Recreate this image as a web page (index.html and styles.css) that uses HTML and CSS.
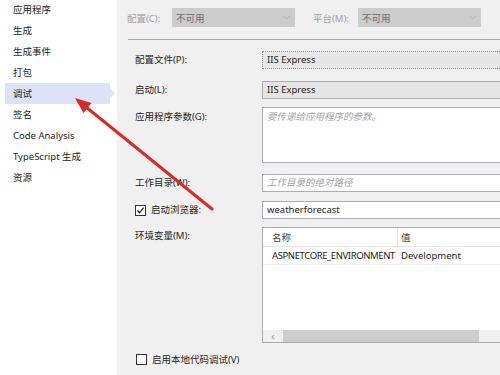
FILE: index.html
```html
<!DOCTYPE html>
<html lang="zh-CN">
<head>
    <meta charset="UTF-8">
    <title>调试</title>
    <link rel="stylesheet" href="styles.css">
</head>
<body>
    <div class="window">
        <aside class="sidebar">
            <ul class="nav">
                <li class="nav-item">应用程序</li>
                <li class="nav-item">生成</li>
                <li class="nav-item">生成事件</li>
                <li class="nav-item">打包</li>
                <li class="nav-item active">调试</li>
                <li class="nav-item">签名</li>
                <li class="nav-item">Code Analysis</li>
                <li class="nav-item">TypeScript 生成</li>
                <li class="nav-item">资源</li>
            </ul>
        </aside>

        <main class="panel">
            <div class="toolbar">
                <span class="toolbar-label">配置(C):</span>
                <div class="select disabled">
                    <span>不可用</span>
                    <svg class="chevron" width="7" height="5" viewBox="0 0 7 5"><path d="M0.5 1 L3.5 4 L6.5 1" fill="none" stroke="#b4b4b4" stroke-width="1"/></svg>
                </div>
                <span class="toolbar-label second">平台(M):</span>
                <div class="select disabled">
                    <span>不可用</span>
                    <svg class="chevron" width="7" height="5" viewBox="0 0 7 5"><path d="M0.5 1 L3.5 4 L6.5 1" fill="none" stroke="#b4b4b4" stroke-width="1"/></svg>
                </div>
            </div>
            <div class="divider"></div>

            <div class="form">
                <div class="field">
                    <span class="field-label">配置文件(P):</span>
                    <div class="control combo focused">IIS Express</div>
                </div>
                <div class="field gap-8">
                    <span class="field-label">启动(L):</span>
                    <div class="control combo">IIS Express</div>
                </div>
                <div class="field gap-8 tight">
                    <span class="field-label">应用程序参数(G):</span>
                    <div class="control textarea placeholder">要传递给应用程序的参数。</div>
                </div>
                <div class="field gap-11">
                    <span class="field-label">工作目录(W):</span>
                    <div class="control input placeholder">工作目录的绝对路径</div>
                </div>
                <div class="field gap-9">
                    <label class="field-label check-label">
                        <span class="checkbox checked">
                            <svg width="9" height="9" viewBox="0 0 9 9"><path d="M1.5 4.5 L3.6 6.8 L7.6 1.6" fill="none" stroke="#222" stroke-width="1.3"/></svg>
                        </span>
                        启动浏览器:
                    </label>
                    <div class="control input">weatherforecast</div>
                </div>
                <div class="field gap-8">
                    <span class="field-label">环境变量(M):</span>
                    <div class="env-table">
                        <div class="env-row env-head">
                            <span class="cell name">名称</span>
                            <span class="cell value">值</span>
                        </div>
                        <div class="env-row">
                            <span class="cell name caps">ASPNETCORE_ENVIRONMENT</span>
                            <span class="cell value">Development</span>
                        </div>
                        <div class="env-fill"></div>
                        <div class="hscroll">
                            <span class="hscroll-btn">&lsaquo;</span>
                            <span class="hscroll-thumb"></span>
                        </div>
                    </div>
                </div>
            </div>

            <label class="native-debug">
                <span class="checkbox"></span>
                启用本地代码调试(V)
            </label>
        </main>

        <svg class="annotation" width="500" height="375" viewBox="0 0 500 375">
            <line x1="212" y1="209" x2="86" y2="107" stroke="#d92a2a" stroke-width="3" stroke-linecap="round"/>
            <polygon points="75,98 91.5,103 83.5,113" fill="#d92a2a"/>
        </svg>
    </div>
</body>
</html>
```

FILE: styles.css
```css
* {
    margin: 0;
    padding: 0;
    box-sizing: border-box;
}

body {
    width: 500px;
    height: 375px;
    overflow: hidden;
    background-color: #f0f0f0;
    font-family: "Noto Sans", "Noto Sans CJK SC", sans-serif;
    font-size: 9.5px;
    color: #1e1e1e;
}

.window {
    position: relative;
    display: flex;
    width: 500px;
    height: 375px;
}

/* left page list */
.sidebar {
    width: 117px;
    flex: none;
    background-color: #fff;
}

.nav {
    list-style: none;
    margin-top: -1px;
}

.nav-item {
    position: relative;
    height: 21px;
    line-height: 21px;
    margin-left: 5px;
    width: 105px;
    padding-left: 8px;
    color: #1e1e1e;
}

.nav-item.active {
    background-color: #dce2f7;
}

.nav-item.active::after {
    content: "";
    position: absolute;
    right: -5px;
    top: 5px;
    border-top: 5px solid transparent;
    border-bottom: 5px solid transparent;
    border-left: 5px solid #dce2f7;
}

/* right settings panel */
.panel {
    flex: 1;
    min-width: 0;
    overflow: hidden;
    background-color: #f0f0f0;
}

.toolbar {
    display: flex;
    align-items: center;
    height: 39px;
    padding: 0 0 4px 10px;
}

.toolbar-label {
    color: #a0a0a0;
    width: 45px;
    flex: none;
}

.toolbar-label.second {
    margin-left: 18px;
}

.select {
    display: flex;
    align-items: center;
    justify-content: space-between;
    flex: none;
    width: 123px;
    height: 19px;
    padding: 0 5px 0 4px;
}

.select.disabled {
    background-color: #cccccc;
    color: #6d6d6d;
}

.divider {
    height: 1px;
    margin-left: 11px;
    background-color: #a7a7a7;
}

.form {
    padding: 11px 0 0 18px;
}

.field {
    display: flex;
    align-items: flex-start;
}

.field.gap-8 {
    margin-top: 8px;
}

.field.gap-9 {
    margin-top: 9px;
}

.field.gap-11 {
    margin-top: 11px;
}

.field:nth-child(2) {
    margin-top: 12px;
}

.field-label {
    width: 127px;
    flex: none;
    line-height: 18px;
}

.field.tight .field-label {
    line-height: 20px;
}

.control {
    flex: none;
    width: 260px;
    height: 18px;
    line-height: 16px;
    padding-left: 4px;
    border: 1px solid #abadb3;
    background-color: #fff;
    white-space: nowrap;
}

.control.combo {
    background-color: #e6e6e6;
    border-color: #acacac;
}

.control.combo.focused {
    border: 1px dotted #8a8a8a;
}

.control.textarea {
    height: 56px;
    line-height: 17px;
}

.placeholder {
    color: #a3a3a3;
    font-style: italic;
}

.check-label {
    display: flex;
    align-items: center;
}

.checkbox {
    display: inline-flex;
    align-items: center;
    justify-content: center;
    width: 11px;
    height: 11px;
    margin-right: 5px;
    border: 1px solid #333;
    background-color: #fff;
}

/* environment variable grid */
.env-table {
    position: relative;
    display: flex;
    flex-direction: column;
    flex: none;
    width: 260px;
    height: 116px;
    border: 1px solid #abadb3;
    background-color: #fff;
}

.env-row {
    display: flex;
    height: 18px;
    line-height: 18px;
    border-bottom: 1px solid #f0f0f0;
}

.env-head {
    height: 19px;
    line-height: 19px;
    color: #444;
    border-bottom: 1px solid #e5e5e5;
}

.cell.name {
    width: 135px;
    padding-left: 9px;
    white-space: nowrap;
    flex: none;
}

.cell.caps {
    letter-spacing: -0.4px;
}

.env-head .cell.name {
    border-right: 1px solid #e5e5e5;
}

.cell.value {
    padding-left: 3px;
    white-space: nowrap;
}

.env-fill {
    flex: 1;
}

.hscroll {
    display: flex;
    height: 12px;
    background-color: #f0f0f0;
}

.hscroll-btn {
    width: 20px;
    line-height: 11px;
    text-align: center;
    color: #9a9a9a;
    font-size: 11px;
}

.hscroll-thumb {
    width: 196px;
    background-color: #cdcdcd;
}

.native-debug {
    display: flex;
    align-items: center;
    margin: 11px 0 0 19px;
    line-height: 11px;
}

/* red pointer drawn over the screenshot */
.annotation {
    position: absolute;
    top: 0;
    left: 0;
    pointer-events: none;
}
```
